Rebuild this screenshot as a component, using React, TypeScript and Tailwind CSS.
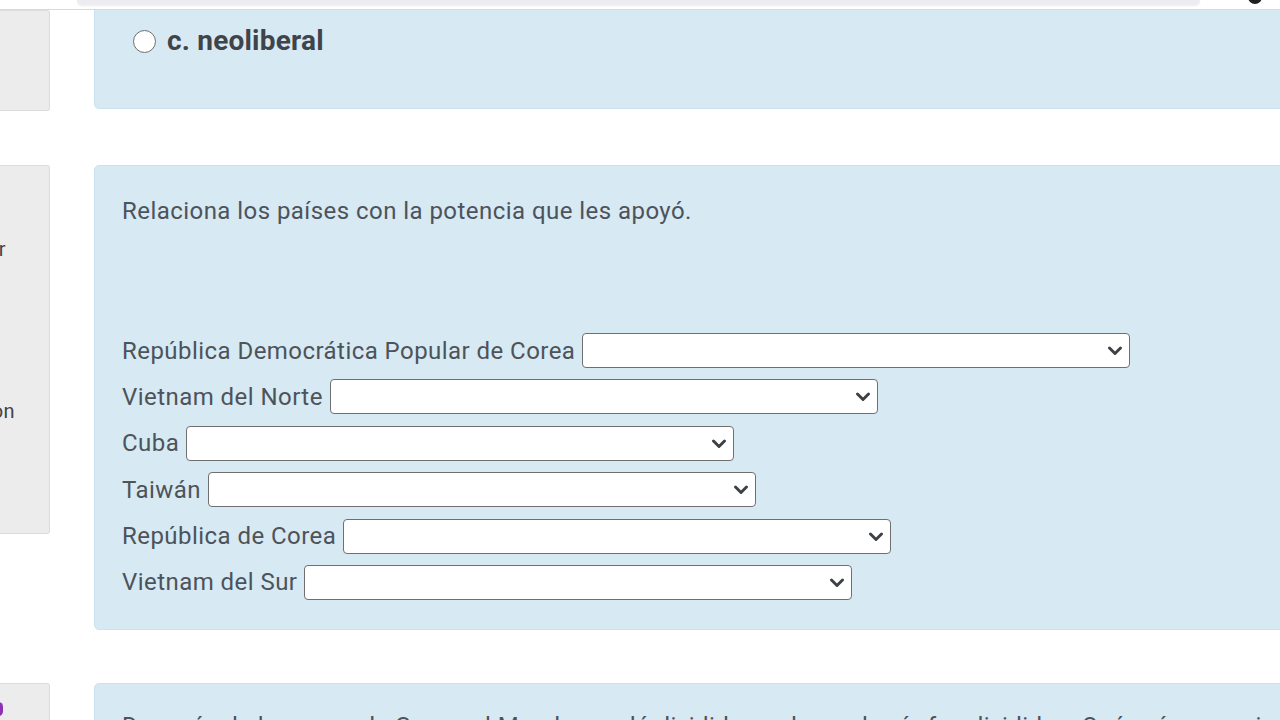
import { useState } from "react";

const pairs = [
  "República Democrática Popular de Corea",
  "Vietnam del Norte",
  "Cuba",
  "Taiwán",
  "República de Corea",
  "Vietnam del Sur",
];

function Chevron() {
  return (
    <svg width="16" height="10" viewBox="0 0 16 10" aria-hidden="true">
      <path d="M2.5 2 L8 7.5 L13.5 2" fill="none" stroke="#3d4146" strokeWidth="2.9" strokeLinecap="round" strokeLinejoin="round" />
    </svg>
  );
}

function MatchRow({ label }: { label: string }) {
  const [value, setValue] = useState("");
  return (
    <div className="flex h-[35px] items-center gap-[7px]">
      <span className="whitespace-nowrap">{label}</span>
      <div className="relative h-[35px] w-[548px] shrink-0">
        <select
          value={value}
          onChange={(e) => setValue(e.target.value)}
          className="h-full w-full appearance-none rounded-[4px] border border-[#6f6f6f] bg-white px-3 text-[#333]"
        >
          <option value=""></option>
          <option value="usa">Estados Unidos</option>
          <option value="urss">URSS</option>
        </select>
        <span className="pointer-events-none absolute right-[7px] top-[13px]">
          <Chevron />
        </span>
      </div>
    </div>
  );
}

function SidePanel({ className, children }: { className: string; children?: React.ReactNode }) {
  return (
    <div className={`w-[50px] shrink-0 rounded-r-[3px] border border-l-0 border-[#dcdcdc] bg-[#ececec] ${className}`}>
      {children}
    </div>
  );
}

export default function App() {
  return (
    <div className="h-[720px] overflow-hidden bg-white font-['Roboto','Noto_Sans',sans-serif] text-[24px] tracking-[0.45px] text-[#4d535a]">
      <header className="flex h-[10px] border-b border-[#d9d9d9]">
        <div className="ml-[77px] h-[5px] w-[1123px] rounded-b-[10px] bg-[#ededf1] shadow-[0_1px_2px_rgba(0,0,0,0.08)]" />
        <div className="ml-auto mr-[18px] -mt-[10px] h-[14px] w-[14px] rounded-full bg-[#1f1f1f]" />
      </header>

      {/* pregunta anterior */}
      <div className="flex items-start gap-[44px]">
        <SidePanel className="h-[101px]" />
        <div className="-mr-[20px] h-[99px] flex-1 rounded-b-[5px] border border-t-0 border-[#c9e3ee] bg-[#d7e9f3] pl-[38px] pt-[10px]">
          <label className="flex items-center gap-[11px]">
            <span className="h-[23px] w-[23px] rounded-full border-[1.5px] border-[#6e6e6e] bg-white" />
            <span className="text-[28px] font-bold tracking-[0.2px] text-[#3f444a]">c. neoliberal</span>
          </label>
        </div>
      </div>

      {/* relacionar */}
      <div className="mt-[54px] flex items-start gap-[44px]">
        <SidePanel className="h-[369px] pt-[68px]">
          <div className="flex w-[6px] justify-end whitespace-nowrap text-[20px] text-[#444]">Sin contestar</div>
          <div className="mt-[132px] flex w-[15px] justify-end whitespace-nowrap text-[20px] text-[#444]">Puntuacion</div>
        </SidePanel>
        <div className="-mr-[20px] flex-1 rounded-[5px] border border-[#c9e3ee] bg-[#d7e9f3] pb-[29px] pl-[27px] pt-[29px]">
          <p className="leading-[32px]">Relaciona los países con la potencia que les apoyó.</p>
          <div className="mt-[106px] flex flex-col gap-[11.4px]">
            {pairs.map((p) => (
              <MatchRow key={p} label={p} />
            ))}
          </div>
        </div>
      </div>

      {/* siguiente pregunta */}
      <div className="mt-[53px] flex items-start gap-[44px]">
        <SidePanel className="h-[100px] pt-[18px]">
          <div className="-ml-[6px] h-[14px] w-[9px] rounded-full bg-[#8e2fb8]" />
        </SidePanel>
        <div className="-mr-[20px] h-[100px] flex-1 rounded-[5px] border border-[#c9e3ee] bg-[#d7e9f3] pl-[27px] pt-[26px]">
          <p className="whitespace-nowrap leading-[32px]">
            Después de la guerra de Corea, el Mundo quedó dividido en dos y el país fue dividido. ¿Qué países se vieron afectados por la guerra fría?
          </p>
        </div>
      </div>
    </div>
  );
}
